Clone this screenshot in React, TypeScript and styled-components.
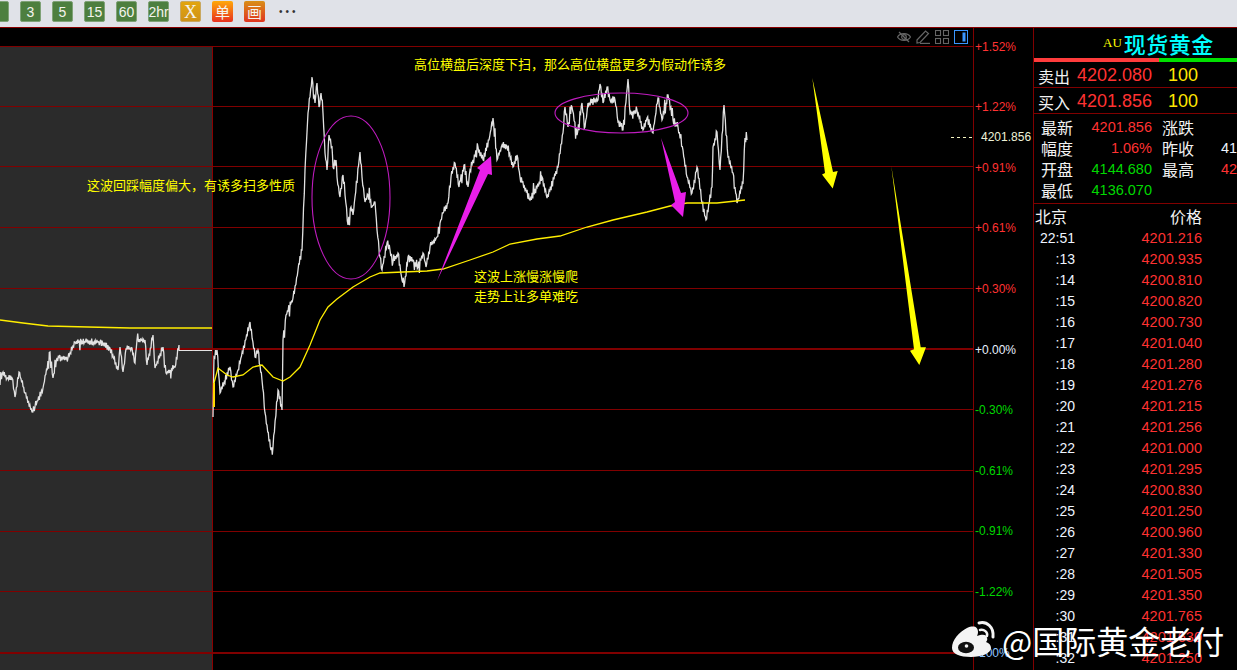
import React from 'react'
import styled, { createGlobalStyle } from 'styled-components'

const RED = '#ff3232'
const GREEN = '#00d800'
const GRID = '#800000'
const CJK = '"Noto Sans CJK SC", "Liberation Sans", sans-serif'
const LATIN = '"Liberation Sans", "Noto Sans CJK SC", sans-serif'

const GlobalStyle = createGlobalStyle`
  html, body {
    margin: 0;
    height: 100%;
    overflow: hidden;
    background: #000;
  }
  * {
    box-sizing: border-box;
  }
`

const Page = styled.div`
  position: relative;
  display: flex;
  flex-direction: column;
  width: 1237px;
  height: 670px;
  overflow: hidden;
  background: #000;
  font-family: ${LATIN};
`

const Toolbar = styled.div`
  display: flex;
  align-items: flex-start;
  gap: 11px;
  flex: 0 0 28px;
  margin-left: -12px;
  padding-top: 1px;
  background: #e0e2e8;
  border-bottom: 1px solid #8a0000;
`

const tones: Record<string, string> = {
  green: 'background: #4d7f3f; border: 1px solid #7fa277;',
  amber: 'background: linear-gradient(#e2a50f, #cf9216); border: 1px solid #c9a860;',
  hot: 'background: linear-gradient(#ffa90a, #e8301f);',
  warm: 'background: linear-gradient(#d98f18, #e0341f);',
}

const toneFonts: Record<string, string> = {
  green: `font-family: ${LATIN}; font-size: 14px;`,
  amber: 'font-family: "Liberation Serif", serif; font-size: 18px;',
  hot: `font-family: ${CJK}; font-size: 15px;`,
  warm: `font-family: ${CJK}; font-size: 15px;`,
}

const ToolButton = styled.button<{ $tone: string }>`
  display: flex;
  align-items: center;
  justify-content: center;
  width: 21px;
  height: 21px;
  padding: 0;
  border: none;
  border-radius: 2px;
  color: #f4f4ee;
  line-height: 1;
  ${(p) => toneFonts[p.$tone]}
  ${(p) => tones[p.$tone]}
`

const MoreDots = styled.span`
  margin-left: 3px;
  color: #333;
  font-size: 10px;
  line-height: 21px;
  letter-spacing: 3px;
`

const Main = styled.div`
  display: flex;
  flex: 1;
  min-height: 0;
`

const ChartPane = styled.div`
  position: relative;
  flex: 0 0 973px;
  overflow: hidden;
`

const ChartSvg = styled.svg`
  display: block;
  width: 973px;
  height: 642px;
`

const IconBar = styled.div`
  position: absolute;
  top: 2px;
  right: 5px;
  display: flex;
  gap: 5px;

  svg {
    display: block;
    width: 14px;
    height: 14px;
  }
`

const Note = styled.div<{ $x: number; $y: number }>`
  position: absolute;
  left: ${(p) => p.$x}px;
  top: ${(p) => p.$y - 28}px;
  color: #ffff00;
  font-family: ${CJK};
  font-size: 13px;
  line-height: 20px;
  white-space: nowrap;
`

const Axis = styled.div`
  position: relative;
  display: flex;
  flex-direction: column;
  gap: 44.6px;
  flex: 0 0 60px;
  padding: 10.6px 0 0 1px;
  border-left: 1px solid ${GRID};
`

const Tick = styled.div<{ $color: string; $indent?: number }>`
  height: 16px;
  padding-left: ${(p) => p.$indent ?? 0}px;
  color: ${(p) => p.$color};
  font-size: 12px;
  line-height: 16px;
`

const LastPrice = styled.div`
  position: absolute;
  top: 101px;
  left: 7px;
  color: #eef2d8;
  font-size: 12px;
  line-height: 16px;
`

const Side = styled.aside`
  display: flex;
  flex-direction: column;
  flex: 1;
  min-width: 0;
  overflow: hidden;
  border-left: 1px solid ${GRID};
`

const Title = styled.div`
  display: flex;
  align-items: center;
  flex: 0 0 30px;
  padding-left: 69px;
  gap: 2px;
`

const TitleCode = styled.span`
  color: #ffff00;
  font-family: "Liberation Serif", serif;
  font-size: 13px;
`

const TitleName = styled.span`
  color: #00ffff;
  font-family: ${CJK};
  font-size: 22px;
  font-weight: 500;
  letter-spacing: 0.5px;
  line-height: 30px;
`

const RatioBar = styled.div`
  display: flex;
  flex: 0 0 4px;
`

const RatioPart = styled.div<{ $color: string; $grow: number }>`
  flex: ${(p) => p.$grow};
  background: ${(p) => p.$color};
`

const QuoteRow = styled.div`
  display: grid;
  grid-template-columns: 36px 78px 1fr;
  align-items: center;
  flex: 0 0 26px;
  padding: 2px 0 0 4px;
  border-bottom: 1px solid ${GRID};
`

const Label = styled.span`
  color: #f2f2f2;
  font-family: ${CJK};
  font-size: 16px;
  line-height: 20px;
  white-space: nowrap;
`

const QuotePrice = styled.span`
  color: ${RED};
  font-size: 18px;
  text-align: right;
`

const QuoteSize = styled.span`
  padding-left: 16px;
  color: #ffe600;
  font-size: 18px;
`

const InfoGrid = styled.div`
  display: grid;
  grid-template-columns: 36px 75px 36px 1fr;
  grid-auto-rows: 21px;
  align-items: center;
  flex: 0 0 90px;
  padding: 2px 0 0 7px;
  border-bottom: 1px solid ${GRID};
`

const InfoValue = styled.span<{ $color: string }>`
  color: ${(p) => p.$color};
  font-size: 14.5px;
  text-align: right;
`

const InfoLabelRight = styled(Label)`
  margin-left: 10px;
`

const InfoValueRight = styled.span<{ $color: string }>`
  padding-left: 33px;
  color: ${(p) => p.$color};
  font-size: 14.5px;
`

const TableHead = styled.div`
  display: flex;
  justify-content: space-between;
  flex: 0 0 23px;
  padding: 2px 35px 0 1px;
`

const TickRow = styled.div`
  display: grid;
  grid-template-columns: 41px 127px;
  align-items: center;
  flex: 0 0 21px;
`

const TickTime = styled.span`
  color: #eef4ff;
  font-size: 14px;
  text-align: right;
`

const TickPrice = styled.span`
  color: ${RED};
  font-size: 14.5px;
  text-align: right;
`

const Watermark = styled.div`
  position: absolute;
  left: 945px;
  top: 615px;
  display: flex;
  align-items: center;
  color: #fff;
  font-family: ${CJK};
  font-size: 32px;
  line-height: 50px;
  white-space: nowrap;

  svg {
    display: block;
    width: 60px;
    height: 50px;
    margin-right: -3px;
  }
`

// 价格线关键点，按截图坐标读出来的
const historyLine: number[][] = [
  [0, 385], [3, 372], [7, 378], [12, 378], [15, 397], [19, 372], [25, 393], [32, 412], [35, 407], [43, 388],
  [50, 352], [53, 378], [57, 358], [68, 358], [75, 342], [100, 342], [110, 348], [118, 370], [120, 347], [123, 372],
  [126, 349], [132, 348], [135, 363], [137, 340], [145, 340], [147, 365], [153, 335], [155, 368], [163, 347],
  [166, 373], [175, 367], [179, 345], [179, 350],
]

const liveLine: number[][] = [
  [213, 417], [214, 357], [217, 350], [220, 393], [230, 367], [233, 387], [238, 370], [250, 322], [255, 357],
  [258, 350], [262, 380], [265, 413], [271, 450], [273, 447], [278, 390], [282, 410], [283, 340], [286, 315],
  [293, 298], [298, 270], [302, 250], [305, 170], [308, 113], [312, 77], [315, 103], [317, 83], [319, 107],
  [321, 93], [323, 113], [325, 153], [327, 170], [329, 135], [332, 147], [333, 167], [336, 160], [337, 177],
  [340, 197], [343, 175], [345, 195], [348, 225], [351, 207], [353, 215], [355, 197], [360, 152], [362, 177],
  [365, 202], [368, 195], [372, 207], [375, 202], [377, 230], [380, 257], [382, 270], [387, 243], [390, 250],
  [393, 262], [398, 253], [402, 280], [404, 287], [408, 257], [413, 260], [418, 267], [423, 253], [426, 267],
  [430, 247], [437, 237], [440, 223], [443, 213], [448, 203], [451, 177], [455, 163], [459, 187], [464, 165],
  [468, 187], [470, 170], [478, 147], [483, 160], [489, 140], [493, 118], [497, 160], [502, 145], [507, 147],
  [513, 167], [517, 155], [520, 177], [530, 200], [542, 177], [547, 198], [558, 167], [563, 133], [565, 107],
  [568, 127], [572, 107], [577, 135], [582, 103], [585, 127], [588, 103], [598, 100], [600, 84], [603, 103],
  [607, 87], [610, 100], [615, 100], [618, 122], [623, 130], [628, 79], [630, 113], [637, 110], [643, 130],
  [647, 118], [653, 133], [658, 98], [662, 120], [668, 95], [673, 120], [678, 127], [683, 150], [687, 177],
  [692, 193], [697, 167], [702, 203], [706, 220], [712, 187], [713, 147], [717, 132], [720, 170], [724, 105],
  [728, 157], [733, 173], [737, 203], [743, 183], [745, 138], [747, 140],
]

const avgHistory = [[0, 320], [23, 323], [48, 326], [88, 327], [130, 328], [212, 328]]

const avgLive = [
  [214, 383], [218, 368], [227, 375], [233, 377], [243, 375], [253, 367], [262, 365], [273, 377],
  [283, 381], [290, 377], [300, 367], [310, 345], [320, 320], [328, 307], [337, 299], [353, 287], [370, 277],
  [380, 273], [403, 272], [427, 271], [443, 269], [470, 260], [493, 252], [510, 244], [537, 239], [560, 236],
  [587, 227], [613, 220], [647, 212], [670, 206], [687, 203], [717, 203], [745, 200],
]

let seed = 7
const rand = () => {
  seed = (seed * 16807) % 2147483647
  return seed / 2147483647
}

// 关键点之间补上来回抖动，偶尔来一根长毛刺，不然线太光滑
function jitter(points: number[][], amp: number) {
  const out: string[] = []
  let sign = 1
  points.forEach(([x, y], i) => {
    out.push(`${x},${y}`)
    const next = points[i + 1]
    if (!next) return
    const steps = Math.max(2, Math.round(Math.abs(next[0] - x) / 0.7))
    for (let s = 1; s < steps; s++) {
      const t = s / steps
      sign = -sign
      const size = rand() < 0.08 ? amp * 3 : amp
      const wiggle = sign * rand() * size
      out.push(`${(x + (next[0] - x) * t).toFixed(1)},${(y + (next[1] - y) * t + wiggle).toFixed(1)}`)
    }
  })
  return out.join(' ')
}

const toPoints = (points: number[][]) => points.map((p) => p.join(',')).join(' ')

const gridRows = [46, 106, 166, 227, 288, 348, 409, 470, 531, 591, 652]

const ticks = [
  { text: '+1.52%', color: RED },
  { text: '+1.22%', color: RED },
  { text: '+0.91%', color: RED },
  { text: '+0.61%', color: RED },
  { text: '+0.30%', color: RED },
  { text: '+0.00%', color: '#e8f0ff' },
  { text: '-0.30%', color: GREEN },
  { text: '-0.61%', color: GREEN },
  { text: '-0.91%', color: GREEN },
  { text: '-1.22%', color: GREEN },
  { text: '100%', color: '#8fc4ff', indent: 4 },
]

const tape = [
  ['22:51', '4201.216'], [':13', '4200.935'], [':14', '4200.810'], [':15', '4200.820'], [':16', '4200.730'],
  [':17', '4201.040'], [':18', '4201.280'], [':19', '4201.276'], [':20', '4201.215'], [':21', '4201.256'],
  [':22', '4201.000'], [':23', '4201.295'], [':24', '4200.830'], [':25', '4201.250'], [':26', '4200.960'],
  [':27', '4201.330'], [':28', '4201.505'], [':29', '4201.350'], [':30', '4201.765'], [':31', '4201.630'],
  [':32', '4201.250'],
]

function Chart() {
  return (
    <ChartSvg viewBox="0 28 973 642">
      <rect x="0" y="47" width="212" height="623" fill="#2b2b2b" />
      {gridRows.map((y) => {
        const thick = y === 348 || y === 652
        return (
          <line
            key={y}
            x1="0"
            x2="973"
            y1={thick ? y + 1 : y + 0.5}
            y2={thick ? y + 1 : y + 0.5}
            stroke={GRID}
            strokeWidth={thick ? 2 : 1}
            shapeRendering="crispEdges"
          />
        )
      })}
      <line x1="212.5" x2="212.5" y1="46" y2="670" stroke="#8a0000" shapeRendering="crispEdges" />

      <polyline points={toPoints(avgHistory)} fill="none" stroke="#ffee00" strokeWidth="1.3" />
      <polyline points={jitter(historyLine, 3.5)} fill="none" stroke="#e2e2e2" strokeWidth="1.3" />
      <line x1="179" x2="212" y1="350.5" y2="350.5" stroke="#e2e2e2" strokeWidth="1.2" />
      <polyline points={jitter(liveLine, 4)} fill="none" stroke="#e2e2e2" strokeWidth="1.3" />
      <line x1="214" x2="214" y1="383" y2="407" stroke="#ffd800" strokeWidth="2" />
      <polyline points={toPoints(avgLive)} fill="none" stroke="#ffee00" strokeWidth="1.3" />

      <ellipse cx="351" cy="197.5" rx="39" ry="81.5" fill="none" stroke="#c01cc0" strokeWidth="1.1" />
      <ellipse cx="621.5" cy="113" rx="66.5" ry="20" fill="none" stroke="#c01cc0" strokeWidth="1.1" />

      <polygon points="437,281 480,170 477,168 491,156 492,175 488,174" fill="#e81ee8" />
      <polygon points="661,138 681,193 686,192 683,217 671,205 675,202" fill="#e81ee8" />
      <polygon points="812.3,78 833,172 837.7,171 832.7,188.5 822,174.5 825,173" fill="#ffff00" />
      <polygon points="891.3,166 920.7,347.3 926,347.3 919.3,365 910,350.7 914,349.3" fill="#ffff00" />

      <line x1="951" x2="972" y1="137.5" y2="137.5" stroke="#f4f4c0" strokeDasharray="3 3" shapeRendering="crispEdges" />
    </ChartSvg>
  )
}

function ChartIcons() {
  return (
    <IconBar>
      <svg viewBox="0 0 14 14" fill="none" stroke="#666" strokeWidth="1.2">
        <path d="M0.5 7 C3 2.5 11 2.5 13.5 7 C11 11.5 3 11.5 0.5 7 Z" />
        <circle cx="7" cy="7" r="2.3" />
        <path d="M2 2 L12 12" />
      </svg>
      <svg viewBox="0 0 14 14" fill="none" stroke="#666" strokeWidth="1.2">
        <path d="M1 10 L9.5 1 L12.5 3.5 L4 12.5 L1 13 Z" />
        <path d="M4 13.4 L14 13.4" />
      </svg>
      <svg viewBox="0 0 14 14" fill="none" stroke="#666" strokeWidth="1.1">
        <rect x="0.5" y="0.5" width="5" height="5" />
        <rect x="8.5" y="0.5" width="5" height="5" />
        <rect x="0.5" y="8.5" width="5" height="5" />
        <rect x="8.5" y="8.5" width="5" height="5" />
      </svg>
      <svg viewBox="0 0 14 14" fill="none">
        <rect x="0.5" y="0.5" width="13" height="13" stroke="#3a96ff" />
        <rect x="8.5" y="2.5" width="3" height="9" fill="#3a96ff" />
      </svg>
    </IconBar>
  )
}

function WeiboMark() {
  return (
    <svg viewBox="0 0 60 50">
      <path
        d="M7 33 C7 25 14 17 22 13 C29 10 33 12 33 17 C33 19 32 21 32 21 C37 19 42 19 42 23 C43 25 41 27 41 27 C44 28 46 30 46 33 C46 38 37 42 26 42 C15 42 7 39 7 33 Z"
        fill="#f4f4f4"
      />
      <ellipse cx="21" cy="32.5" rx="8" ry="5.8" fill="#111" />
      <circle cx="21.5" cy="31" r="1.8" fill="#f4f4f4" />
      <path d="M34 8 C42 6 49 12 48 22" fill="none" stroke="#f4f4f4" strokeWidth="3" strokeLinecap="round" />
      <path d="M35 15 C39 14 43 17 42 21" fill="none" stroke="#f4f4f4" strokeWidth="2.5" strokeLinecap="round" />
    </svg>
  )
}

export default function App() {
  return (
    <Page>
      <GlobalStyle />
      <Toolbar>
        {['', '3', '5', '15', '60', '2hr'].map((label) => (
          <ToolButton key={label} $tone="green">
            {label}
          </ToolButton>
        ))}
        <ToolButton $tone="amber">X</ToolButton>
        <ToolButton $tone="hot">单</ToolButton>
        <ToolButton $tone="warm">画</ToolButton>
        <MoreDots>•••</MoreDots>
      </Toolbar>
      <Main>
        <ChartPane>
          <Chart />
          <ChartIcons />
          <Note $x={414} $y={54}>高位横盘后深度下扫，那么高位横盘更多为假动作诱多</Note>
          <Note $x={87} $y={175}>这波回踩幅度偏大，有诱多扫多性质</Note>
          <Note $x={474} $y={266}>这波上涨慢涨慢爬</Note>
          <Note $x={474} $y={286}>走势上让多单难吃</Note>
        </ChartPane>
        <Axis>
          {ticks.map((t) => (
            <Tick key={t.text} $color={t.color} $indent={t.indent}>
              {t.text}
            </Tick>
          ))}
          <LastPrice>4201.856</LastPrice>
        </Axis>
        <Side>
          <Title>
            <TitleCode>AU</TitleCode>
            <TitleName>现货黄金</TitleName>
          </Title>
          <RatioBar>
            <RatioPart $color="#ff3c3c" $grow={125} />
            <RatioPart $color="#00e000" $grow={78} />
          </RatioBar>
          <QuoteRow>
            <Label>卖出</Label>
            <QuotePrice>4202.080</QuotePrice>
            <QuoteSize>100</QuoteSize>
          </QuoteRow>
          <QuoteRow>
            <Label>买入</Label>
            <QuotePrice>4201.856</QuotePrice>
            <QuoteSize>100</QuoteSize>
          </QuoteRow>
          <InfoGrid>
            <Label>最新</Label>
            <InfoValue $color={RED}>4201.856</InfoValue>
            <InfoLabelRight>涨跌</InfoLabelRight>
            <span />
            <Label>幅度</Label>
            <InfoValue $color={RED}>1.06%</InfoValue>
            <InfoLabelRight>昨收</InfoLabelRight>
            <InfoValueRight $color="#eef4ff">41</InfoValueRight>
            <Label>开盘</Label>
            <InfoValue $color={GREEN}>4144.680</InfoValue>
            <InfoLabelRight>最高</InfoLabelRight>
            <InfoValueRight $color={RED}>42</InfoValueRight>
            <Label>最低</Label>
            <InfoValue $color={GREEN}>4136.070</InfoValue>
          </InfoGrid>
          <TableHead>
            <Label>北京</Label>
            <Label>价格</Label>
          </TableHead>
          {tape.map(([time, price]) => (
            <TickRow key={time}>
              <TickTime>{time}</TickTime>
              <TickPrice>{price}</TickPrice>
            </TickRow>
          ))}
        </Side>
      </Main>
      <Watermark>
        <WeiboMark />
        @国际黄金老付
      </Watermark>
    </Page>
  )
}
